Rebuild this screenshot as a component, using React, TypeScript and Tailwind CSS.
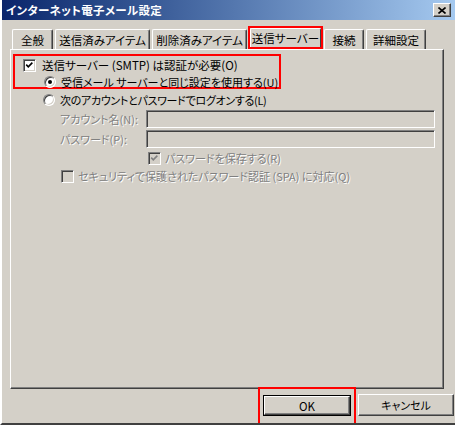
import React from "react";

const font = "font-['Noto_Sans_CJK_JP',sans-serif] [font-feature-settings:'palt'] whitespace-nowrap";
const dim = "text-[#808080] [text-shadow:1px_1px_0_#ffffff]";

function Check({ checked, disabled }: { checked?: boolean; disabled?: boolean }) {
  return (
    <span
      className={`relative inline-block w-[13px] h-[13px] shrink-0 border border-t-[#808080] border-l-[#808080] border-b-white border-r-white shadow-[inset_1px_1px_0_#404040,inset_-1px_-1px_0_#d4d0c8] ${
        disabled ? "bg-[#d4d0c8]" : "bg-white"
      }`}
    >
      {checked && (
        <svg viewBox="0 0 11 11" className="absolute left-[1px] top-[1px] w-[9px] h-[9px]">
          <path
            d="M1.5 4.5 L4 7 L9 2"
            fill="none"
            stroke={disabled ? "#808080" : "#000"}
            strokeWidth="2"
          />
        </svg>
      )}
    </span>
  );
}

function Radio({ checked }: { checked?: boolean }) {
  return (
    <span className="relative inline-block w-[12px] h-[12px] shrink-0 rounded-full bg-white border border-t-[#808080] border-l-[#808080] border-b-white border-r-white shadow-[inset_1px_1px_0_#404040,inset_-1px_-1px_0_#d4d0c8]">
      {checked && (
        <span className="absolute left-[3px] top-[3px] w-[4px] h-[4px] rounded-full bg-black" />
      )}
    </span>
  );
}

function Tab({ label, w, active }: { label: string; w: string; active?: boolean }) {
  if (active) {
    return (
      <div className={`${w} h-[23px] ml-[1px] -mr-[1px] relative z-10 flex`}>
        <div className="flex-1 border-2 border-[#ff0000] flex">
          <div className="flex-1 bg-[#d4d0c8] border-l border-t border-white border-r border-r-[#404040] rounded-t-[2px] flex items-center justify-center text-[11.5px] leading-[14px]">
            {label}
          </div>
        </div>
      </div>
    );
  }
  return (
    <div
      className={`${w} h-[20px] ml-[2px] bg-[#d4d0c8] border-l border-t border-white border-r border-r-[#404040] shadow-[inset_-1px_0_0_#808080] rounded-t-[2px] flex items-center justify-center text-[11.5px] leading-[14px]`}
    >
      {label}
    </div>
  );
}

function Field() {
  return (
    <div className="w-[289px] h-[18px] bg-[#d4d0c8] border border-t-[#808080] border-l-[#808080] border-b-white border-r-white shadow-[inset_1px_1px_0_#404040,inset_-1px_-1px_0_#d4d0c8]" />
  );
}

export default function App() {
  return (
    <div className={`w-[455px] h-[425px] overflow-hidden bg-[#d4d0c8] text-black ${font}`}>
      <div className="h-[425px] overflow-hidden border-l-2 border-white border-b-2 border-b-[#404040]">
        <div className="h-[20px] -ml-[2px] overflow-hidden bg-gradient-to-r from-[#0a246a] to-[#a6caf0] flex items-center justify-between pl-[6px] pr-[4px]">
          <span className="text-white font-bold text-[11.5px] leading-[18px] tracking-[0.3px]">インターネット電子メール設定</span>
          <span className="w-[18px] h-[14px] bg-[#d4d0c8] border border-t-white border-l-white border-b-[#404040] border-r-[#404040] shadow-[inset_-1px_-1px_0_#808080] flex items-center justify-center">
            <svg viewBox="0 0 8 7" className="w-[8px] h-[7px]">
              <path d="M0.5 0.5 L7.5 6.5 M7.5 0.5 L0.5 6.5" stroke="#000" strokeWidth="1.6" />
            </svg>
          </span>
        </div>

        <div className="pl-[8px] pt-[6px]">
          <div className="flex items-end h-[23px]">
            <Tab label="全般" w="w-[41px]" />
            <Tab label="送信済みアイテム" w="w-[95px]" />
            <Tab label="削除済みアイテム" w="w-[95px]" />
            <Tab label="送信サーバー" w="w-[75px]" active />
            <Tab label="接続" w="w-[40px]" />
            <Tab label="詳細設定" w="w-[60px]" />
          </div>

          <div className="w-[434px] h-[340px] border-l border-t border-white border-r border-b border-r-[#404040] border-b-[#404040] shadow-[inset_-1px_-1px_0_#808080] text-[11px] pt-[4px]">
            <div className="ml-[2px] w-[268px] h-[35px] border-2 border-[#ff0000] pl-[8px] pt-[2px]">
              <div className="flex items-center gap-[6px] h-[14px]">
                <Check checked />
                <span className="leading-[14px] text-[11.5px]">送信サーバー (SMTP) は認証が必要(O)</span>
              </div>
              <div className="flex items-center gap-[5px] h-[14px] mt-[3px] ml-[21px]">
                <Radio checked />
                <span className="leading-[14px]">受信メール サーバーと同じ設定を使用する(U)</span>
              </div>
            </div>
            <div className="flex items-center gap-[5px] h-[14px] mt-[4px] ml-[32px]">
              <Radio />
              <span className="leading-[14px] tracking-[-0.3px]">次のアカウントとパスワードでログオンする(L)</span>
            </div>
            <div className="flex items-center h-[18px] mt-[3px] ml-[49px]">
              <span className={`w-[86px] leading-[14px] ${dim}`}>アカウント名(N):</span>
              <Field />
            </div>
            <div className="flex items-center h-[18px] mt-[2px] ml-[49px]">
              <span className={`w-[86px] leading-[14px] ${dim}`}>パスワード(P):</span>
              <Field />
            </div>
            <div className="flex items-center gap-[4px] h-[14px] mt-[3px] ml-[137px]">
              <Check checked disabled />
              <span className={`leading-[14px] ${dim}`}>パスワードを保存する(R)</span>
            </div>
            <div className="flex items-center gap-[4px] h-[14px] mt-[4px] ml-[50px]">
              <Check disabled />
              <span className={`leading-[14px] ${dim}`}>セキュリティで保護されたパスワード認証 (SPA) に対応(Q)</span>
            </div>
          </div>

          <div className="flex items-start mt-[-2px]">
            <div className="ml-[248px] w-[98px] h-[45px] border-2 border-[#ff0000] pl-[3px] pt-[6px]">
              <button className="w-[88px] h-[21px] border border-black bg-[#d4d0c8] flex">
                <span className="flex-1 border border-t-white border-l-white border-b-[#404040] border-r-[#404040] shadow-[inset_-1px_-1px_0_#808080] flex items-center justify-center text-[11.5px] leading-[14px]">
                  OK
                </span>
              </button>
            </div>
            <button className="ml-[2px] mt-[7px] w-[96px] h-[22px] bg-[#d4d0c8] border border-t-white border-l-white border-b-[#404040] border-r-[#404040] shadow-[inset_-1px_-1px_0_#808080] flex items-center justify-center text-[11px] leading-[14px]">
              キャンセル
            </button>
          </div>
        </div>
      </div>
    </div>
  );
}
